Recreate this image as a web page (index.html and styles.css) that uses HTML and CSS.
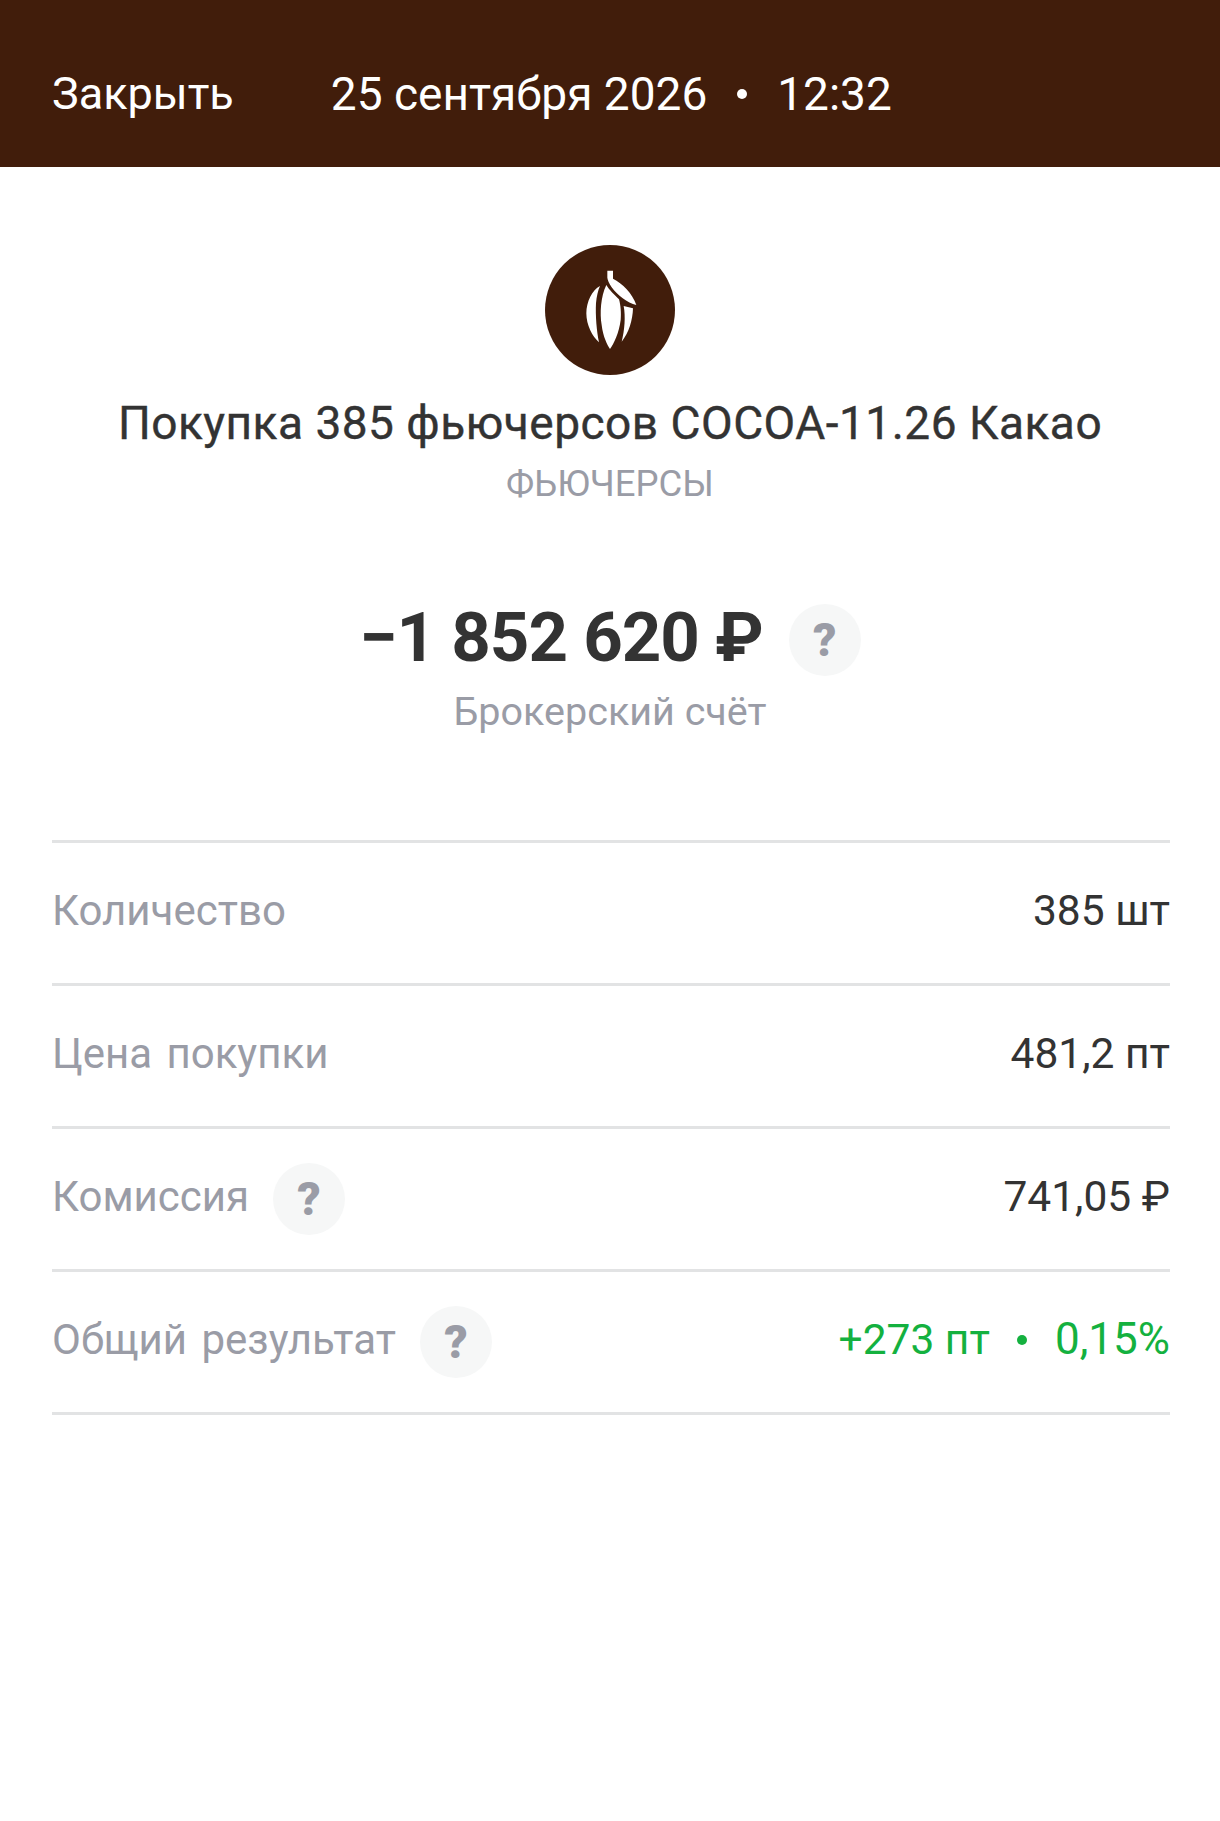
FILE: index.html
```html
<!DOCTYPE html>
<html lang="ru">
<head>
  <meta charset="UTF-8" />
  <meta name="viewport" content="width=device-width, initial-scale=1.0" />
  <title>Покупка фьючерсов</title>
  <link rel="stylesheet" href="styles.css">
</head>
<body>

  <!-- Top bar -->
  <div class="topbar">
    <span class="close">Закрыть</span>
    <span class="date">25 сентября 2026</span>
    <span class="dot dot-white"></span>
    <span>12:32</span>
  </div>

  <!-- Operation summary -->
  <div class="summary">
    <div class="logo">
      <svg viewBox="48 45 390 390" width="130" height="130">
        <path fill="#fff" d="M232 165C215 200 212 250 218 285C222 320 235 345 243 357C255 340 270 310 275 270C277 250 275 225 270 208C258 195 240 180 232 165Z" />
        <path fill="#fff" d="M213 168C190 180 172 215 172 250C172 285 190 320 210 337C203 305 199 255 201 220C203 200 207 180 213 168Z" />
        <path fill="#fff" d="M284 228L312 235C311 270 300 308 278 335C287 300 290 260 284 228Z" />
        <path fill="#fff" d="M235 122L252 122L252 146C280 160 310 190 322 225C295 220 265 195 248 172C240 160 236 150 235 143Z" />
      </svg>
    </div>
    <h1 class="title">Покупка 385 фьючерсов COCOA-11.26 Какао</h1>
    <div class="category">ФЬЮЧЕРСЫ</div>
    <div class="amount-row">
      <span class="amount">−1 852 620 ₽</span>
      <span class="help">?</span>
    </div>
    <div class="account">Брокерский счёт</div>
  </div>

  <!-- Details -->
  <div class="details">
    <div class="row">
      <span class="label"><span class="label-text">Количество</span></span>
      <span class="value">385 шт</span>
    </div>
    <div class="row">
      <span class="label"><span class="label-text">Цена покупки</span></span>
      <span class="value">481,2 пт</span>
    </div>
    <div class="row">
      <span class="label"><span class="label-text">Комиссия</span> <span class="help">?</span></span>
      <span class="value">741,05 ₽</span>
    </div>
    <div class="row">
      <span class="label"><span class="label-text">Общий результат</span> <span class="help">?</span></span>
      <span class="value green">+273 пт <span class="dot dot-green"></span> <span class="percent">0,15%</span></span>
    </div>
  </div>

</body>
</html>
```

FILE: styles.css
```css
body {
  margin: 0;
  min-height: 1821px;
  background: #fff;
  font-family: Roboto, "Noto Sans", sans-serif;
  color: #333;
}

.topbar {
  display: flex;
  align-items: center;
  height: 147px;
  padding: 20px 52px 0;
  background: #411d0b;
  color: #fff;
  font-size: 46px;
}

.close {
  margin-right: 97px;
  font-size: 45px;
}

.dot {
  display: inline-block;
  width: 10px;
  height: 10px;
  border-radius: 50%;
}

.dot-white {
  background: #fff;
  margin: 0 30px;
}

.dot-green {
  background: #14b13f;
  margin: 0 17px 6px;
  vertical-align: middle;
}

.summary {
  display: flex;
  flex-direction: column;
  align-items: center;
  padding-top: 78px;
}

.logo {
  display: flex;
  width: 130px;
  height: 130px;
  border-radius: 50%;
  background: #411d0b;
}

.title {
  margin: 18px 0 0;
  font-size: 46px;
  line-height: 60px;
  font-weight: 400;
  letter-spacing: 0.5px;
  -webkit-text-stroke: 0.4px #333;
}

.category {
  margin-top: 9px;
  font-size: 36.5px;
  line-height: 44px;
  color: #9a9ca6;
}

.amount-row {
  display: flex;
  align-items: center;
  gap: 26px;
  margin-top: 92px;
}

.amount {
  font-size: 69px;
  line-height: 80px;
  font-weight: 700;
  letter-spacing: -1px;
}

.amount-row .help {
  margin-top: 3px;
}

.help {
  display: inline-flex;
  align-items: center;
  justify-content: center;
  width: 72px;
  height: 72px;
  border-radius: 50%;
  background: #f6f7f7;
  color: #9a9ca6;
  font-size: 46px;
  font-weight: 900;
}

.account {
  margin-top: 9px;
  font-size: 39.5px;
  line-height: 50px;
  color: #9a9ca6;
}

.details {
  margin: 103px 50px 0 52px;
  border-top: 3px solid #e2e3e4;
}

.row {
  display: flex;
  justify-content: space-between;
  align-items: center;
  height: 140px;
  border-bottom: 3px solid #e2e3e4;
  font-size: 42.5px;
}

.label {
  display: flex;
  align-items: center;
  gap: 24px;
  font-size: 42px;
  word-spacing: 4px;
  color: #9a9ca6;
}

.label-text {
  padding-bottom: 6px;
}

.value {
  padding-bottom: 6px;
  color: #333;
}

.green {
  color: #14b13f;
}

.percent {
  font-size: 44px;
}
```
